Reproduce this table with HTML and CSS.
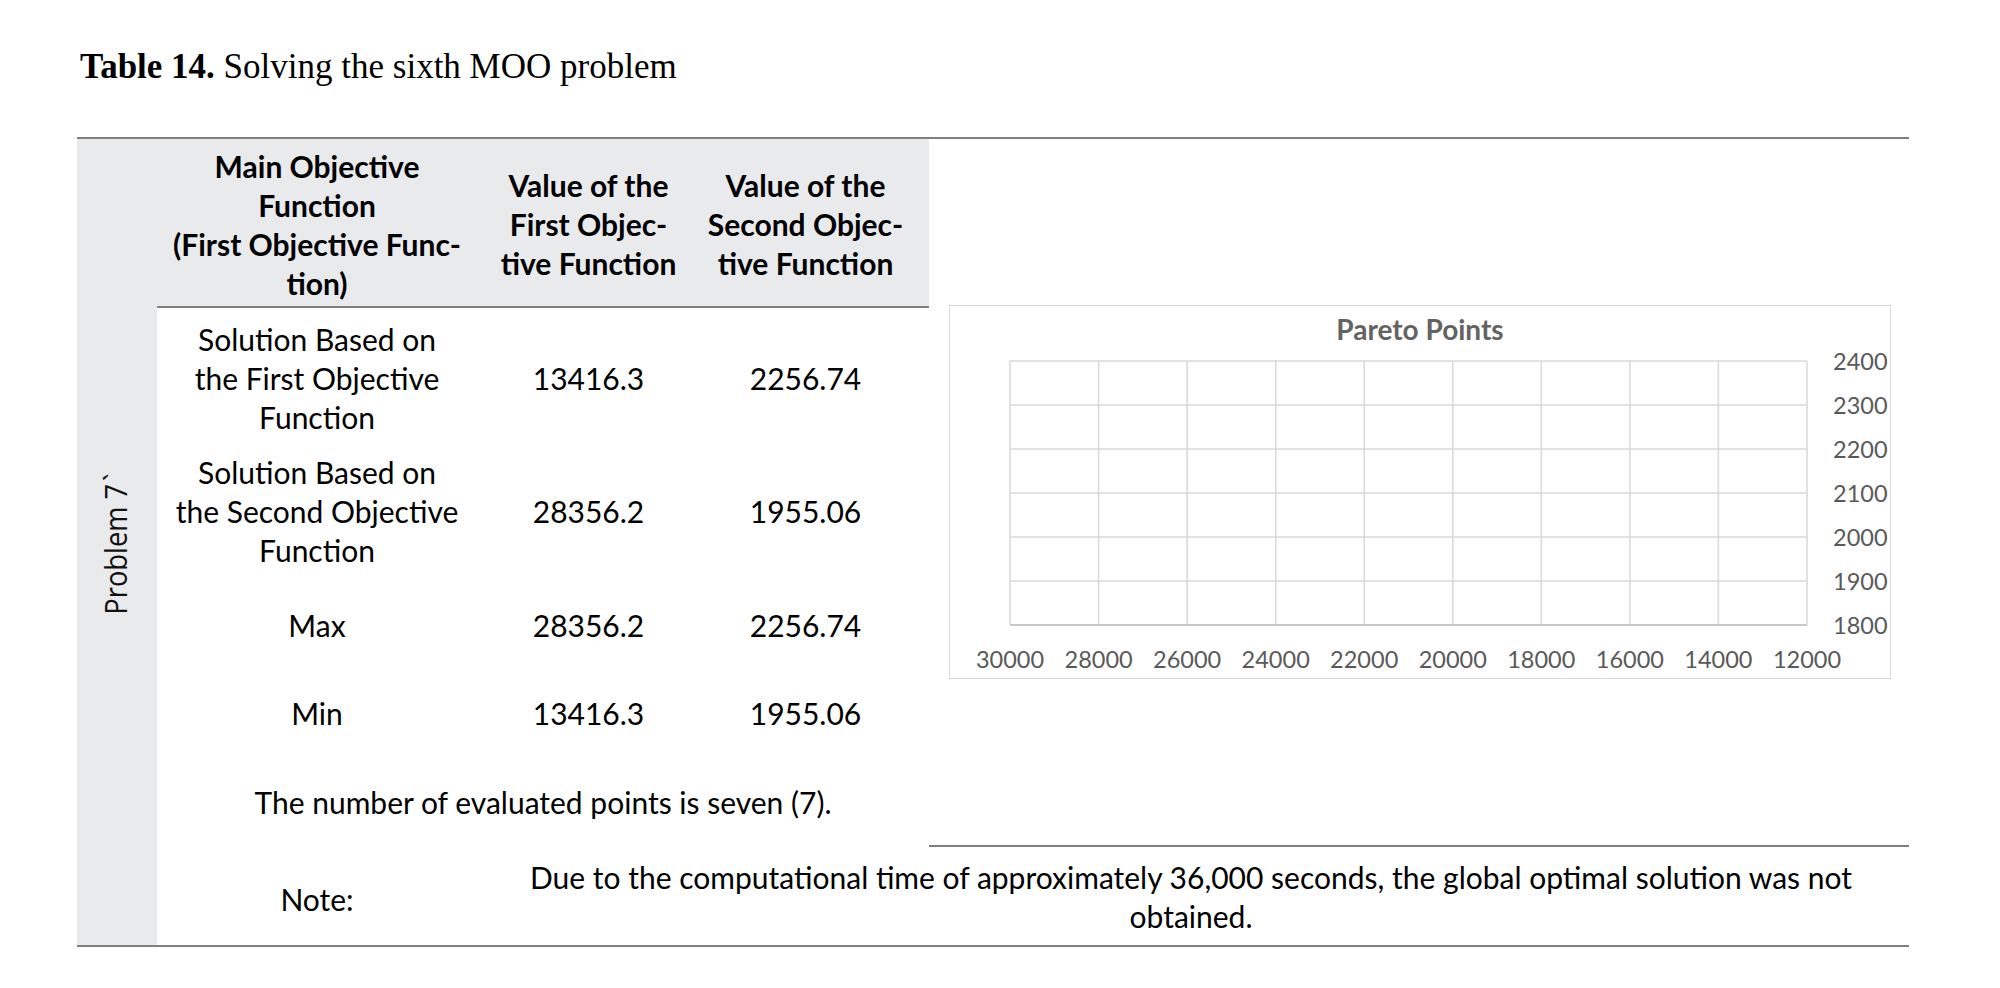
FILE: index.html
```html
<!DOCTYPE html>
<html lang="en">
<head>
<meta charset="utf-8">
<title>Table 14</title>
<link rel="stylesheet" href="styles.css">
</head>
<body>
<div class="page">
  <h1 class="caption"><b>Table 14.</b> Solving the sixth MOO problem</h1>
  <div class="table">
    <div class="side"><span class="side-label">Problem 7<span class="acc">`</span></span></div>
    <div class="main">
      <div class="top">
        <div class="left">
          <div class="row head">
            <div class="c1">Main Objective<br>Function<br>(First Objective Func-<br>tion)</div>
            <div class="c2">Value of the<br>First Objec-<br>tive Function</div>
            <div class="c3">Value of the<br>Second Objec-<br>tive Function</div>
          </div>
          <div class="row r1">
            <div class="c1">Solution Based on<br>the First Objective<br>Function</div>
            <div class="c2">13416.3</div>
            <div class="c3">2256.74</div>
          </div>
          <div class="row r2">
            <div class="c1">Solution Based on<br>the Second Objective<br>Function</div>
            <div class="c2">28356.2</div>
            <div class="c3">1955.06</div>
          </div>
          <div class="row r3">
            <div class="c1">Max</div>
            <div class="c2">28356.2</div>
            <div class="c3">2256.74</div>
          </div>
          <div class="row r4">
            <div class="c1">Min</div>
            <div class="c2">13416.3</div>
            <div class="c3">1955.06</div>
          </div>
          <div class="count">The number of evaluated points is seven (7).</div>
        </div>
        <div class="right">
          <div class="chart">
            <div class="chart-title">Pareto Points</div>
            <svg class="plot" width="940" height="330" viewBox="0 0 940 330">
              <g class="grid">
                <line x1="60" y1="12" x2="857" y2="12"/>
                <line x1="60" y1="56" x2="857" y2="56"/>
                <line x1="60" y1="100" x2="857" y2="100"/>
                <line x1="60" y1="144" x2="857" y2="144"/>
                <line x1="60" y1="188" x2="857" y2="188"/>
                <line x1="60" y1="232" x2="857" y2="232"/>
                <line x1="60" y1="12" x2="60" y2="276"/>
                <line x1="148.6" y1="12" x2="148.6" y2="276"/>
                <line x1="237.1" y1="12" x2="237.1" y2="276"/>
                <line x1="325.7" y1="12" x2="325.7" y2="276"/>
                <line x1="414.2" y1="12" x2="414.2" y2="276"/>
                <line x1="502.8" y1="12" x2="502.8" y2="276"/>
                <line x1="591.3" y1="12" x2="591.3" y2="276"/>
                <line x1="679.9" y1="12" x2="679.9" y2="276"/>
                <line x1="768.4" y1="12" x2="768.4" y2="276"/>
                <line x1="857" y1="12" x2="857" y2="276"/>
              </g>
              <line class="axis" x1="60" y1="276" x2="857" y2="276"/>
              <g class="ylab">
                <text x="883" y="12">2400</text>
                <text x="883" y="56">2300</text>
                <text x="883" y="100">2200</text>
                <text x="883" y="144">2100</text>
                <text x="883" y="188">2000</text>
                <text x="883" y="232">1900</text>
                <text x="883" y="276">1800</text>
              </g>
              <g class="xlab">
                <text x="60" y="310">30000</text>
                <text x="148.6" y="310">28000</text>
                <text x="237.1" y="310">26000</text>
                <text x="325.7" y="310">24000</text>
                <text x="414.2" y="310">22000</text>
                <text x="502.8" y="310">20000</text>
                <text x="591.3" y="310">18000</text>
                <text x="679.9" y="310">16000</text>
                <text x="768.4" y="310">14000</text>
                <text x="857" y="310">12000</text>
              </g>
            </svg>
          </div>
        </div>
      </div>
      <div class="note-row">
        <div class="note-label">Note:</div>
        <div class="note-text">Due to the computational time of approximately 36,000 seconds, the global optimal solution was not<br>obtained.</div>
      </div>
    </div>
  </div>
</div>
</body>
</html>
```

FILE: styles.css
```css
html, body {
  margin: 0;
  padding: 0;
  background: #ffffff;
}

.page {
  padding-left: 77px;
  width: 1832px;
  color: #000;
  font-family: Lato, "Open Sans", sans-serif;
}

.caption {
  margin: 47px 0 50px 3px;
  font-family: "Liberation Serif", "Times New Roman", serif;
  font-size: 35px;
  line-height: 40px;
  font-weight: 400;
}

.caption b {
  font-weight: 700;
}

.table {
  display: flex;
  width: 1832px;
  border-top: 2px solid #7f7f7f;
  border-bottom: 2px solid #7f7f7f;
  font-size: 30px;
  line-height: 39px;
}

.side {
  width: 80px;
  flex: none;
  background: #e9eaec;
  display: flex;
  align-items: center;
  justify-content: center;
}

.side-label {
  writing-mode: vertical-rl;
  transform: rotate(180deg) scaleY(0.88);
  font-family: "Open Sans", sans-serif;
  font-size: 31px;
  line-height: 40px;
  color: #111;
  white-space: nowrap;
  margin-left: -4px;
  margin-top: 4px;
}

.side-label .acc {
  padding-top: 3px;
}

.main {
  flex: 1;
  display: flex;
  flex-direction: column;
}

.top {
  display: flex;
}

.left {
  width: 772px;
  flex: none;
}

.row {
  display: grid;
  grid-template-columns: 320px 223px 229px;
  align-items: center;
  text-align: center;
}

.row .c3 {
  padding-right: 18px;
}

.head {
  height: 163px;
  padding-top: 4px;
  background: #e9eaec;
  border-bottom: 2px solid #808080;
  font-weight: 700;
}

.r1 { height: 140px; }
.r2 { height: 126px; }
.r3 { height: 102px; }
.r4 { height: 74px; }

.count {
  height: 97px;
  box-sizing: border-box;
  padding-top: 8px;
  display: flex;
  align-items: center;
  justify-content: center;
}

.right {
  flex: 1;
  border-bottom: 2px solid #7f7f7f;
}

.chart {
  margin: 166px 0 0 20px;
  width: 940px;
  height: 372px;
  border: 1px solid #d9d9d9;
  display: flex;
  flex-direction: column;
}

.chart-title {
  height: 44px;
  padding-top: 3px;
  box-sizing: border-box;
  text-align: center;
  font-weight: 700;
  font-size: 28px;
  line-height: 40px;
  color: #636363;
}

.plot {
  display: block;
  overflow: visible;
}

.grid line {
  stroke: #d9d9d9;
  stroke-width: 1.5;
}

.axis {
  stroke: #c9c9c9;
  stroke-width: 2;
}

.ylab text,
.xlab text {
  font-family: Lato, "Open Sans", sans-serif;
  font-size: 23.5px;
  fill: #595959;
  dominant-baseline: central;
}

.xlab text {
  text-anchor: middle;
}

.ylab text {
  text-anchor: start;
}

.note-row {
  display: grid;
  grid-template-columns: 320px 1fr;
  height: 98px;
  align-items: center;
  text-align: center;
}

.note-label {
  padding-top: 6px;
}

.note-text {
  padding-right: 4px;
  padding-top: 2px;
}
```
